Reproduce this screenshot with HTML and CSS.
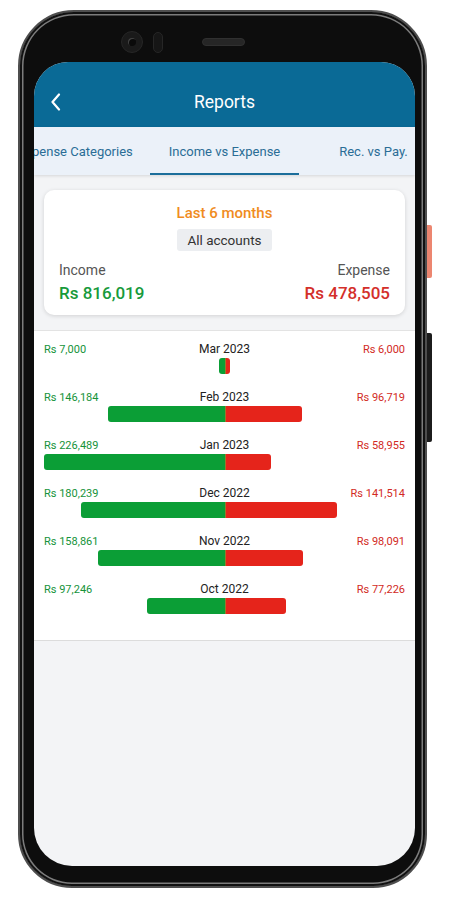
FILE: index.html
```html
<!DOCTYPE html>
<html lang="en">
<head>
<meta charset="utf-8">
<title>Reports</title>
<link rel="stylesheet" href="styles.css">
</head>
<body>
<div class="phone">
  <div class="bezel-top">
    <span class="cam"><span class="lens"></span></span>
    <span class="sensor"></span>
    <span class="speaker"></span>
  </div>
  <div class="screen">
    <header class="appbar">
      <span class="back">
        <svg width="12" height="18" viewBox="0 0 12 18"><path d="M9 1.5 L2.5 9 L9 16.5" fill="none" stroke="#fff" stroke-width="2.2" stroke-linecap="round" stroke-linejoin="round"/></svg>
      </span>
      <h1 class="title">Reports</h1>
      <span></span>
    </header>
    <nav class="tabs">
      <div class="tab-track">
        <div class="tab">Expense Categories</div>
        <div class="tab active">Income vs Expense</div>
        <div class="tab">Rec. vs Pay.</div>
      </div>
    </nav>
    <section class="card">
      <div class="period">Last 6 months</div>
      <div class="chip">All accounts</div>
      <div class="totals">
        <div class="total">
          <div class="t-label">Income</div>
          <div class="t-value inc-text">Rs 816,019</div>
        </div>
        <div class="total right">
          <div class="t-label">Expense</div>
          <div class="t-value exp-text">Rs 478,505</div>
        </div>
      </div>
    </section>
    <section class="chart">
      <div class="row">
        <div class="labels"><span class="amt inc-amt">Rs 7,000</span><span class="month">Mar 2023</span><span class="amt exp-amt">Rs 6,000</span></div>
        <div class="bars"><div class="half left"><div class="bar inc" style="width:3.09%"></div></div><div class="half"><div class="bar exp" style="width:2.65%"></div></div></div>
      </div>
      <div class="row">
        <div class="labels"><span class="amt inc-amt">Rs 146,184</span><span class="month">Feb 2023</span><span class="amt exp-amt">Rs 96,719</span></div>
        <div class="bars"><div class="half left"><div class="bar inc" style="width:64.54%"></div></div><div class="half"><div class="bar exp" style="width:42.70%"></div></div></div>
      </div>
      <div class="row">
        <div class="labels"><span class="amt inc-amt">Rs 226,489</span><span class="month">Jan 2023</span><span class="amt exp-amt">Rs 58,955</span></div>
        <div class="bars"><div class="half left"><div class="bar inc" style="width:100%"></div></div><div class="half"><div class="bar exp" style="width:26.03%"></div></div></div>
      </div>
      <div class="row">
        <div class="labels"><span class="amt inc-amt">Rs 180,239</span><span class="month">Dec 2022</span><span class="amt exp-amt">Rs 141,514</span></div>
        <div class="bars"><div class="half left"><div class="bar inc" style="width:79.58%"></div></div><div class="half"><div class="bar exp" style="width:62.48%"></div></div></div>
      </div>
      <div class="row">
        <div class="labels"><span class="amt inc-amt">Rs 158,861</span><span class="month">Nov 2022</span><span class="amt exp-amt">Rs 98,091</span></div>
        <div class="bars"><div class="half left"><div class="bar inc" style="width:70.14%"></div></div><div class="half"><div class="bar exp" style="width:43.31%"></div></div></div>
      </div>
      <div class="row">
        <div class="labels"><span class="amt inc-amt">Rs 97,246</span><span class="month">Oct 2022</span><span class="amt exp-amt">Rs 77,226</span></div>
        <div class="bars"><div class="half left"><div class="bar inc" style="width:42.94%"></div></div><div class="half"><div class="bar exp" style="width:34.10%"></div></div></div>
      </div>
    </section>
  </div>
  <span class="btn-power"></span>
  <span class="btn-volume"></span>
</div>
</body>
</html>
```
FILE: styles.css
```css
* { box-sizing: border-box; }
html, body {
  margin: 0;
  padding: 0;
  background: #ffffff;
  font-family: Roboto, "Liberation Sans", Arial, sans-serif;
}
.phone {
  position: relative;
  margin: 10px 0 0 18px;
  width: 409px;
  height: 878px;
  background: #0d0d0d;
  border: 2px solid #4e4e4e;
  border-radius: 56px 56px 54px 54px;
  box-shadow: inset 0 0 0 2px #111, inset 0 0 0 3.5px #7c7c7c;
  padding: 0 10px 20px 14px;
  display: flex;
  flex-direction: column;
}
.bezel-top {
  height: 50px;
  flex: 0 0 50px;
  padding: 10px 0 0 87px;
  display: flex;
  align-items: center;
}
.cam {
  width: 22px;
  height: 22px;
  border-radius: 50%;
  background: #1a1a1a;
  border: 1px solid #262626;
  display: flex;
  align-items: center;
  justify-content: center;
}
.lens {
  width: 8px;
  height: 8px;
  border-radius: 50%;
  background: #0a0a0a;
  box-shadow: inset 1px 1px 0 #444;
}
.sensor {
  margin-left: 10px;
  width: 10px;
  height: 21px;
  border-radius: 5px;
  background: #161616;
  border: 1px solid #262626;
}
.speaker {
  margin-left: 39px;
  width: 43px;
  height: 8px;
  border-radius: 4px;
  background: #262626;
  border: 1px solid #303030;
}
.screen {
  flex: 1;
  background: #f3f4f6;
  border-radius: 34px 34px 38px 38px;
  overflow: hidden;
  display: flex;
  flex-direction: column;
}
.appbar {
  height: 65px;
  flex: 0 0 65px;
  background: #0a6a96;
  padding-top: 14px;
  display: grid;
  grid-template-columns: 1fr auto 1fr;
  align-items: center;
}
.back {
  padding-left: 16px;
  display: flex;
  align-items: center;
}
.title {
  margin: 0;
  color: #ffffff;
  font-size: 17.5px;
  font-weight: 400;
}
.tabs {
  height: 48px;
  flex: 0 0 48px;
  background: #ebf1f9;
  overflow: hidden;
  box-shadow: 0 1px 3px rgba(0,0,0,0.12);
  position: relative;
}
.tab-track {
  display: flex;
  margin-left: -33px;
  height: 100%;
}
.tab {
  flex: 0 0 149px;
  height: 100%;
  display: flex;
  align-items: center;
  justify-content: center;
  white-space: nowrap;
  font-size: 13px;
  color: #2a6d96;
}
.tab.active {
  box-shadow: inset 0 -2px 0 #1c6e9b;
}
.card {
  margin: 15px 10px 15px;
  background: #ffffff;
  border-radius: 10px;
  box-shadow: 0 1px 4px rgba(0,0,0,0.14);
  padding: 13px 15px 11px;
  display: flex;
  flex-direction: column;
  align-items: center;
}
.period {
  font-size: 15px;
  line-height: 20px;
  font-weight: 500;
  color: #f08c1e;
}
.chip {
  margin-top: 6px;
  height: 22px;
  line-height: 22px;
  padding: 0 10px;
  background: #eceef1;
  border-radius: 3px;
  font-size: 13.5px;
  color: #333;
}
.totals {
  margin-top: 10px;
  align-self: stretch;
  display: flex;
  justify-content: space-between;
}
.total.right { text-align: right; }
.t-label {
  font-size: 14px;
  line-height: 18px;
  color: #555;
}
.t-value {
  margin-top: 3px;
  font-size: 17px;
  line-height: 22px;
  font-weight: 500;
}
.inc-text { color: #179a3b; }
.exp-text { color: #d42f2a; }
.chart {
  background: #ffffff;
  border-top: 1px solid #e3e3e3;
  border-bottom: 1px solid #dcdcdc;
  padding: 11px 10px 10px;
}
.row { margin-bottom: 16px; }
.labels {
  display: grid;
  grid-template-columns: 1fr auto 1fr;
  align-items: center;
  height: 14px;
}
.amt {
  font-size: 11px;
  font-weight: 400;
  white-space: nowrap;
}
.inc-amt { color: #15933a; }
.exp-amt { color: #d22a24; text-align: right; }
.month {
  font-size: 12px;
  font-weight: 400;
  color: #222;
  white-space: nowrap;
}
.bars {
  margin-top: 2px;
  height: 16px;
  display: flex;
}
.half {
  flex: 1;
  display: flex;
}
.half.left { justify-content: flex-end; }
.bar { height: 16px; min-width: 5px; }
.inc {
  background: #0b9e36;
  border-radius: 3px 0 0 3px;
}
.exp {
  background: #e5241b;
  border-radius: 0 3px 3px 0;
  border-left: 1px solid #9a7a2a;
}
.btn-power {
  position: absolute;
  right: -7px;
  top: 213px;
  width: 5px;
  height: 53px;
  background: #ec8670;
  border-radius: 0 2px 2px 0;
}
.btn-volume {
  position: absolute;
  right: -7px;
  top: 321px;
  width: 5px;
  height: 109px;
  background: #1c1c1c;
  border-radius: 0 2px 2px 0;
}
```
